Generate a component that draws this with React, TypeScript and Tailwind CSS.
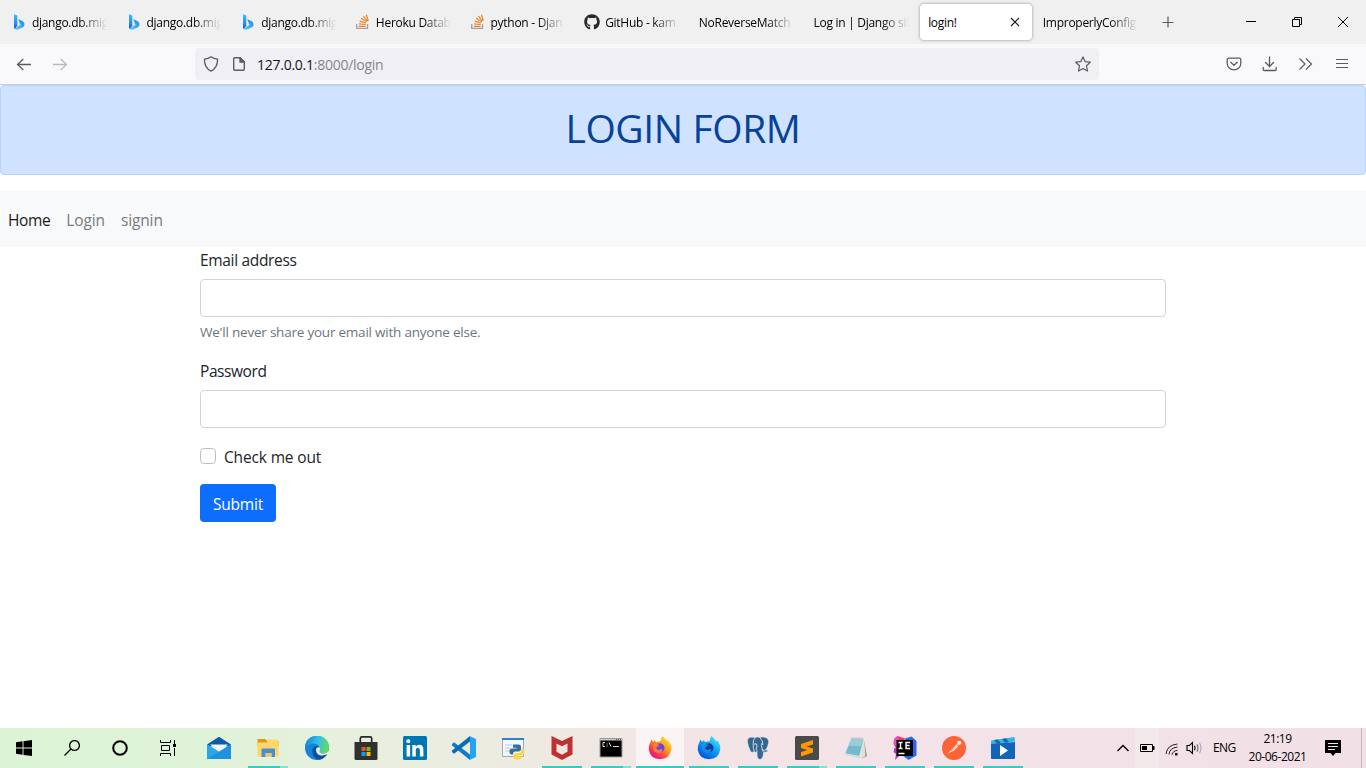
import React from "react";
import { FaGithub } from "react-icons/fa";

function BingIcon() {
  return (
    <svg width="16" height="16" viewBox="0 0 16 16">
      <defs>
        <linearGradient id="bing-a" x1="0" y1="0" x2="0" y2="1">
          <stop offset="0" stopColor="#37bdff" />
          <stop offset="0.6" stopColor="#2b8df0" />
          <stop offset="1" stopColor="#1b48ef" />
        </linearGradient>
        <linearGradient id="bing-b" x1="1" y1="0" x2="0" y2="1">
          <stop offset="0" stopColor="#1b7ff0" />
          <stop offset="1" stopColor="#58d7fb" />
        </linearGradient>
      </defs>
      <path d="M3 .3 6.300 1.600V11.600L4 15Q3 14.600 3 13.400Z" fill="url(#bing-a)" />
      <path d="M7.200 5 11.800 7.200Q13.800 8.600 13.500 11Q13 12.600 11.600 13.400L6.400 15.800Q4.400 16 3.500 14.600L9.600 10.800 8.500 8.900Z" fill="url(#bing-b)" />
    </svg>
  );
}

function StackIcon() {
  return (
    <svg width="16" height="16" viewBox="0 0 16 16" fill="none">
      <path d="M1.700 10v4.300h10.800V10" stroke="#9aa3ae" strokeWidth="1.300" />
      <path d="M3.700 12.300h7M4 9.800l6.700.7M4.700 7.100l6.300 1.900M6.200 4.300l5.400 3.400M8.500 2.200l3.900 5M11.400.7l1.900 6" stroke="#f48024" strokeWidth="1.200" />
    </svg>
  );
}

type Tab = { title: string; icon?: "bing" | "stack" | "github"; active?: boolean };

const tabs: Tab[] = [
  { title: "django.db.mig", icon: "bing" },
  { title: "django.db.mig", icon: "bing" },
  { title: "django.db.mig", icon: "bing" },
  { title: "Heroku Datab", icon: "stack" },
  { title: "python - Djan", icon: "stack" },
  { title: "GitHub - kam", icon: "github" },
  { title: "NoReverseMatch a" },
  { title: "Log in | Django sit" },
  { title: "login!", active: true },
  { title: "ImproperlyConfig" },
];

function BrowserTab({ tab }: { tab: Tab }) {
  return (
    <div className="flex h-11 w-[114.67px] shrink-0 items-center px-px py-1">
      <div
        className={
          tab.active
            ? "flex h-9 w-[112px] items-center rounded-[4px] bg-white pr-[9px] pl-2 shadow-[0_0_3px_rgba(100,100,115,0.75)]"
            : "flex h-9 w-full items-center pr-[9px] pl-2"
        }
      >
        {tab.icon && (
          <span className="mr-[5px] w-4 shrink-0">
            {tab.icon === "bing" && <BingIcon />}
            {tab.icon === "stack" && <StackIcon />}
            {tab.icon === "github" && <FaGithub size={16} color="#24292e" />}
          </span>
        )}
        <span
          className={
            tab.active
              ? "flex-1 pt-0.5 text-[12px] leading-4 tracking-[-0.3px] whitespace-nowrap text-black"
              : "flex-1 overflow-hidden [mask-image:linear-gradient(to_left,transparent,black_28px)] pt-0.5 text-[12px] leading-4 tracking-[-0.28px] whitespace-nowrap text-black"
          }
        >
          {tab.title}
        </span>
        {tab.active && (
          <svg width="16" height="16" viewBox="0 0 16 16" stroke="#15141a" strokeWidth="1.1">
            <path d="M4 4l8 8M12 4l-8 8" />
          </svg>
        )}
      </div>
    </div>
  );
}

function TabStrip() {
  return (
    <div className="flex h-11 bg-[#f0f0f0] pl-[1.9px]">
      {tabs.map((t, i) => (
        <BrowserTab key={i} tab={t} />
      ))}
      <div className="flex flex-1 items-center">
        <svg className="ml-[12px]" width="16" height="16" viewBox="0 0 16 16" stroke="#5b5b66" strokeWidth="1.2">
          <path d="M8 2.500v11M2.500 8.500h11" />
        </svg>
      </div>
      <div className="flex w-[138px]">
        <div className="flex w-[46px] items-center justify-center">
          <svg width="12" height="12" viewBox="0 0 12 12" shapeRendering="crispEdges">
            <path d="M1 5h10v1H1z" fill="#000" />
          </svg>
        </div>
        <div className="flex w-[46px] items-center justify-center">
          <svg width="12" height="12" viewBox="0 0 12 12" fill="none" stroke="#000">
            <path d="M1.500 3.500h7v7h-7zM3.500 3.500v-2h7v7h-2" />
          </svg>
        </div>
        <div className="flex w-[46px] items-center justify-center">
          <svg width="12" height="12" viewBox="0 0 12 12" stroke="#000" strokeWidth="1">
            <path d="M1 1l10 10M11 1L1 11" />
          </svg>
        </div>
      </div>
    </div>
  );
}

function Toolbar() {
  return (
    <div className="flex h-10 items-center bg-[#f9f9fb] text-[#5b5b66]">
      <svg className="ml-4" width="16" height="16" viewBox="0 0 16 16" fill="none" stroke="currentColor" strokeWidth="1.3">
        <path d="M15 8.500H1.500M7.300 3L1.500 8.500 7.300 14" />
      </svg>
      <svg className="ml-5 text-[#b9b9be]" width="16" height="16" viewBox="0 0 16 16" fill="none" stroke="currentColor" strokeWidth="1.3">
        <path d="M1 8.500h13.500M8.700 3l5.800 5.500L8.700 14" />
      </svg>
      <div className="ml-[127px] flex h-8 w-[904px] items-center rounded-[4px] bg-[#f0eff4] pl-2">
        <svg width="16" height="16" viewBox="0 0 16 16" fill="none" stroke="currentColor" strokeWidth="1.3" strokeLinejoin="round">
          <path d="M8 .8C6.400 2 3.700 2.900 1.500 3.100 1.300 7.500 2.800 12.600 8 15.200 13.200 12.600 14.700 7.500 14.500 3.100 12.300 2.900 9.600 2 8 .8Z" />
        </svg>
        <svg className="ml-3" width="16" height="16" viewBox="0 0 16 16" fill="none" stroke="currentColor" strokeWidth="1.4" strokeLinejoin="round">
          <path d="M9 1.700H3.700a1 1 0 0 0-1 1V13.300a1 1 0 0 0 1 1h8.600a1 1 0 0 0 1-1V6Z" />
          <path d="M9 1.700V6h4.300Z" fill="currentColor" />
        </svg>
        <span className="ml-[10px] flex-1 pt-px text-[14px] leading-5 tracking-[-0.26px] text-[#85858c]">
          <span className="text-[#15141a]">127.0.0.1</span>:8000/login
        </span>
        <svg className="mr-2" width="16" height="16" viewBox="0 0 16 16" fill="none" stroke="currentColor" strokeWidth="1.2" strokeLinejoin="round">
          <path d="M8 .9l2.100 4.700 5.200.6-3.800 3.500 1 5.300L8 12.400 3.500 15l1-5.300L.7 6.200l5.200-.6Z" />
        </svg>
      </div>
      <svg className="ml-[127px]" width="16" height="16" viewBox="0 0 16 16" fill="none" stroke="currentColor" strokeWidth="1.3" strokeLinecap="round" strokeLinejoin="round">
        <path d="M2.800 2.200h10.400a1.600 1.600 0 0 1 1.600 1.600V7.500a6.800 6.300 0 0 1-13.600 0V3.800a1.600 1.600 0 0 1 1.600-1.600Z" />
        <path d="M4.700 6.300L8 9.300l3.300-3" />
      </svg>
      <svg className="ml-5" width="16" height="16" viewBox="0 0 16 16" fill="none" stroke="currentColor" strokeWidth="1.300" strokeLinecap="round" strokeLinejoin="round">
        <path d="M7.500 .8v9.500M3.500 6.500l4 4 4-4M1.200 11.500v1.800a1.200 1.200 0 0 0 1.200 1.200h10.600a1.200 1.200 0 0 0 1.200-1.200v-1.800" />
      </svg>
      <svg className="ml-5" width="16" height="16" viewBox="0 0 16 16" fill="none" stroke="currentColor" strokeWidth="1.200">
        <path d="M1.500 2.500L7 8 1.500 13.500M8 2.500L13.500 8 8 13.500" />
      </svg>
      <svg className="ml-5" width="16" height="16" viewBox="0 0 16 16" fill="none" stroke="currentColor" strokeWidth="1.200">
        <path d="M2 3.500h12M2 7.500h12M2 11.500h12" />
      </svg>
    </div>
  );
}

function LoginPage() {
  return (
    <main className="flex-1 bg-white text-[#212529]">
      <div className="mb-4 h-[90px] rounded-[4px] border border-[#b6d4fe] bg-[#cfe2ff] pt-4 text-center text-[#084298]">
        <h1 className="text-[39px] leading-[52px] tracking-[-0.4px]">LOGIN FORM</h1>
      </div>
      <nav className="flex h-14 items-center gap-4 bg-[#f8f9fa] px-2 pt-[3px] text-[15.5px] tracking-[-0.12px] text-[#7a7b7c]">
        <a className="tracking-[-0.4px] text-[#191919]">Home</a>
        <a>Login</a>
        <a>signin</a>
      </nav>
      <form className="mx-[200px] text-[15.5px] leading-6">
        <label className="mb-2 block h-6 pt-px tracking-[-0.33px]">Email address</label>
        <input type="email" className="block h-[38px] w-full rounded-[4px] border border-[#ced4da] px-3" />
        <p className="mt-1 mb-4 h-[21px] text-[13.5px] leading-[22px] tracking-[-0.22px] text-[#6c757d]">We'll never share your email with anyone else.</p>
        <label className="mb-2 block h-6 pt-px tracking-[-0.42px]">Password</label>
        <input type="password" className="block h-[38px] w-full rounded-[4px] border border-[#ced4da] px-3" />
        <div className="mt-4 mb-4 flex h-6">
          <input type="checkbox" className="mt-1 size-4 appearance-none rounded-[4px] border border-[#bfbfbf] bg-white" />
          <label className="ml-2 pt-px tracking-[-0.15px]">Check me out</label>
        </div>
        <button type="button" className="h-[38px] w-[76px] rounded-[4px] bg-[#0d6efd] pt-px text-[15.5px] tracking-[-0.2px] text-white">
          Submit
        </button>
      </form>
    </main>
  );
}

function MailIcon() {
  return (
    <svg width="24" height="24" viewBox="0 0 24 24">
      <path d="M0 8.500l12 7 12-7V23H0Z" fill="#28a8ea" />
      <path d="M0 23L24 8.500V23Z" fill="#1585d8" opacity=".6" />
      <path d="M0 8.500L12 .8l12 7.700-3 1.800H3Z" fill="#0a5ba8" />
      <path d="M3 8.500h18L12 15.500Z" fill="#f3f5f8" />
    </svg>
  );
}

function ExplorerIcon() {
  return (
    <svg width="24" height="24" viewBox="0 0 24 24">
      <path d="M1.500 3h8l1.500 2h11.500v5h-21Z" fill="#d99c16" />
      <path d="M11 3.500h11V8H11Z" fill="#ffd869" />
      <path d="M1.500 6.500h9l1.500-1h10.500V20.500h-21Z" fill="#ffd668" />
      <path d="M5.500 13.500Q5.500 12.500 6.500 12.500h11.500Q19 12.500 19 13.500V21h-3.500v-4h-6V21h-4Z" fill="#468fd4" />
      <path d="M9.500 17h6v3.500h-6Z" fill="#e9c568" />
    </svg>
  );
}

function EdgeIcon() {
  return (
    <svg width="24" height="24" viewBox="0 0 24 24">
      <defs>
        <linearGradient id="edge-top" x1="0" y1=".4" x2="1" y2=".6">
          <stop offset="0" stopColor="#1687d9" />
          <stop offset=".5" stopColor="#32bfe6" />
          <stop offset="1" stopColor="#67dd55" />
        </linearGradient>
      </defs>
      <circle cx="12" cy="12" r="12" fill="#1684d6" />
      <path d="M0 11.500A12 12 0 0 1 24 11.500Q24 17 18.500 17.500 13 17.500 14 14.800 16 12 13 9 7 5 0 11.500Z" fill="url(#edge-top)" />
      <path d="M7.300 14C8.500 9.500 13 8.800 14.500 12.200 11.500 14 13.500 17 17 17.500Q20 18 22.500 16.500 20.500 22 14.500 23.800 7 23 7.300 14Z" fill="#0d4f9b" />
      <path d="M11 14.200Q10.500 11 14.500 11.300 16 12.500 14.700 14.300 13.500 17.500 18.500 17.500 21.500 17.200 24 14.800V17.500Q19 20 15.500 19.500 11.500 18.500 11 14.200Z" fill="#e6efdd" />
    </svg>
  );
}

function StoreIcon() {
  return (
    <svg width="24" height="24" viewBox="0 0 24 24">
      <path d="M6.300 8V2.500a1.700 1.700 0 0 1 1.700-1.600h8A1.700 1.700 0 0 1 17.700 2.500V8" fill="none" stroke="#292929" strokeWidth="1.700" />
      <path d="M.5 6h23v16.500a1.500 1.500 0 0 1-1.500 1.500H2a1.500 1.500 0 0 1-1.500-1.500Z" fill="#303030" />
      <path d="M7.500 11h4v4h-4Z" fill="#f25022" />
      <path d="M12.500 11h4v4h-4Z" fill="#7fba00" />
      <path d="M7.500 16h4v4h-4Z" fill="#00a4ef" />
      <path d="M12.500 16h4v4h-4Z" fill="#ffb900" />
    </svg>
  );
}

function LinkedInIcon() {
  return (
    <svg width="24" height="24" viewBox="0 0 24 24">
      <rect width="24" height="24" rx="1.500" fill="#0077b5" />
      <circle cx="5.300" cy="5.300" r="2" fill="#fff" />
      <path d="M3.600 9h3.500v11.400H3.600ZM9.300 9h3.400v1.600Q13.800 8.700 16.200 8.700 20.400 8.700 20.400 13.700V20.400h-3.500v-6Q16.900 11.800 15 11.800 12.800 11.800 12.800 14.600V20.400H9.300Z" fill="#fff" />
    </svg>
  );
}

function CodeIcon() {
  return (
    <svg width="24" height="24" viewBox="0 0 24 24">
      <path d="M0 8L2 6.200 18 18.500V24L0 9.500Z" fill="#0f7cc5" />
      <path d="M0 16l2 1.800L18 5.500V0L0 14.500Z" fill="#0b6cb5" />
      <path d="M17.500 0L24 3v18l-6.500 3Q18 23.500 18 22.500V1.500Z" fill="#25a4f3" />
    </svg>
  );
}

function PythonFileIcon() {
  return (
    <svg width="24" height="24" viewBox="0 0 24 24">
      <path d="M1.500 2.500h21v18h-21Z" fill="#f5f8fa" stroke="#9eaab3" />
      <path d="M1 2h22v2H1Z" fill="#2a82c9" />
      <path d="M4 9h7M4 12h6M4 15h5" stroke="#c0c9cf" />
      <path d="M12 8.500h5.500Q20 8.500 20 11v2.500q0 2-2.500 2h-3q-2.500 0-2.500 3H10q-2-1-1.500-4 .5-2 2.500-2h4.500v-.8H12V10Z" fill="#336f9f" />
      <path d="M20.500 12.500H22q2 1 1.500 4-.4 2.500-2.500 2.500h-4v.8h3.500v2q-.3 1.700-3.500 1.700-4.500.2-4.500-2v-2.500q0-2 2.500-2h3q2.500-.3 2.500-2.500Z" fill="#ffd545" />
    </svg>
  );
}

function McAfeeIcon() {
  return (
    <svg width="24" height="24" viewBox="0 0 24 24">
      <path d="M1.500 0L12 5 22.500 0v18.500L12 24 1.500 18.500Z" fill="#c02f31" />
      <path d="M6.500 7.500L12 10.300l5.500-2.800V15.800L12 18.800 6.500 15.800Z" fill="#efe6e1" />
    </svg>
  );
}

function TerminalIcon() {
  return (
    <svg width="24" height="24" viewBox="0 0 24 24">
      <path d="M1 2.500h22v18.500H1Z" fill="#000" stroke="#9b9b9b" />
      <path d="M1 3h22v1.500H1Z" fill="#c9c9c9" />
      <path d="M17 3h1v1h-1ZM19 3h1v1h-1ZM21 3h1v1h-1Z" fill="#555" />
      <path d="M6 6.500H4v4h2M8 7.500v1M8 9.500v1M10 6.500l2 4M14 10.500h6" stroke="#ddd" fill="none" />
    </svg>
  );
}

function FirefoxIcon({ dev = false }: { dev?: boolean }) {
  return (
    <svg width="24" height="24" viewBox="0 0 24 24">
      <defs>
        <linearGradient id="ff-body" x1=".85" y1=".1" x2=".2" y2=".9">
          <stop offset="0" stopColor="#ffe226" />
          <stop offset=".4" stopColor="#ff9a1f" />
          <stop offset=".75" stopColor="#ff3c48" />
          <stop offset="1" stopColor="#e31587" />
        </linearGradient>
        <linearGradient id="ffd-body" x1=".8" y1=".1" x2=".2" y2=".9">
          <stop offset="0" stopColor="#3fe1f5" />
          <stop offset=".45" stopColor="#0a9df5" />
          <stop offset="1" stopColor="#0358dc" />
        </linearGradient>
      </defs>
      <path
        d="M14.500 0Q17 2.200 19.500 5.500L20.300 4.200Q24 8.500 23.200 14 21.500 23 12 23.300 2.500 23 .8 14 .4 9.500 2.200 7L3.200 3.600 5.200 6 6.300 4.200 8.200 6 10.500 5.500Q12 5.200 12.800 5 12.500 1.800 14.500 0Z"
        fill={dev ? "url(#ffd-body)" : "url(#ff-body)"}
      />
      <path d="M7 9.300Q9.500 7 12.500 7.300 16.800 8.500 16.500 12.500 15.500 16.500 11.500 16.500 7 16 6.300 12.500Z" fill={dev ? "#1a3c9a" : "#7542d5"} />
      <path d="M4.500 8.500Q8 6.800 11.500 9.300L9.500 10.800Q7.800 11.300 8.500 13 11 14.800 14.200 12.800 14.500 17 10.500 17 6 16.800 5 12.500Z" fill={dev ? "#1296ea" : "#ff8a2a"} opacity=".85" />
    </svg>
  );
}

function PostgresIcon() {
  return (
    <svg width="24" height="24" viewBox="0 0 24 24">
      <path
        d="M1.500 6Q1 1.500 5.500 1.200 7.500 1 9 1.800 11 .6 13.500 1.500 16 .7 18.500 1.200 23 2.200 22.600 6.500 22 10.500 19.800 14 21.500 14.300 22.300 14.400 20.500 16.500 17.500 16.200 17.300 22.500 14.500 23.200 11.500 24 11.200 19.500L11 15.500Q9.500 17 8 15.300 5.500 18 4 14 2.200 10.500 1.500 6Z"
        fill="#336791"
        stroke="#e9e5ea"
        strokeWidth=".5"
      />
      <path d="M8.800 2.200Q6.800 4 7.200 8.500 7 13 8.300 15M8 8.300Q10 7 10.800 8.600 11.400 11 10 13.200 11.200 14 11 15.500M14 1.700Q16.800 4.500 17 8.500 15.300 7.900 15.200 9.700 16.500 11.800 16.200 13.500 17.400 16.200 17.500 16.200M16.400 13.800Q18.500 14.900 19.800 14" fill="none" stroke="#e9edf2" strokeWidth=".85" />
      <circle cx="10" cy="8" r=".5" fill="#fff" />
      <circle cx="15.500" cy="7.700" r=".5" fill="#fff" />
    </svg>
  );
}

function SublimeIcon() {
  return (
    <svg width="24" height="24" viewBox="0 0 24 24">
      <rect width="24" height="24" rx="1.500" fill="#4a4a4a" />
      <path d="M6 8L18 4v4.500l-6.500 2L18 12.500v4L6 20.500V16l6.500-2L6 12Z" fill="#ff9800" />
    </svg>
  );
}

function NotepadIcon() {
  return (
    <svg width="24" height="24" viewBox="0 0 24 24">
      <path d="M19.500 2L23 20l-5 2.500Z" fill="#a18b63" />
      <path d="M17 3.500l3-1.500 1.500 18-4 2.500Z" fill="#dfe0d9" />
      <path d="M7 2.500L20 3 15.500 20.500.8 17.500Z" fill="#76b9ca" stroke="#e7f0f1" strokeWidth=".7" />
      <path d="M7.300 3.200L19.300 3.500 17 10.500 4 9.500Z" fill="#a5d6df" opacity=".7" />
      <path d="M.8 17.500L15.500 20.500 18.500 22.500 15 22 1 19Z" fill="#d4dada" />
      <path d="M8 1.500v1.500M10 1.500v1.500M12 1.500v1.500M14 1.500v1.500M16 1.500v1.500M18 1.500v1.500" stroke="#9b9e9d" strokeWidth=".8" />
    </svg>
  );
}

function IdeaIcon() {
  return (
    <svg width="24" height="24" viewBox="0 0 24 24">
      <path d="M12 2.500L18.500.5 23.500 5V19.500L15.500 24 9 19Z" fill="#2867e8" />
      <path d="M1 3L4.500 0 12 2.500 8 12H3L.5 8Z" fill="#f7315d" />
      <path d="M1.500 12L8 10V18L2 24 3 18 .5 16Z" fill="#ae3bc7" />
      <path d="M1 3L4.500 0 7 5 5 10 1 9Z" fill="#e451ba" />
      <rect x="3.500" y="4" width="16.500" height="16" fill="#000" />
      <path d="M5.500 6.500h4M5.500 12.500h4M7.500 6.500v6M17 6.500h-4v6h4M13 9.500h3.500M5.500 17.500h6" stroke="#fff" strokeWidth="1.400" fill="none" />
    </svg>
  );
}

function PostmanIcon() {
  return (
    <svg width="24" height="24" viewBox="0 0 24 24">
      <circle cx="12" cy="12" r="12" fill="#ff6235" />
      <path d="M5.500 17.500L9 14.200 15 8l1.500 2-5 5Z" fill="#fff3ed" />
      <circle cx="17.200" cy="6.800" r="2.100" fill="#fff3ed" />
      <path d="M9 15l7-6M8.500 14l2.200 2" stroke="#ff6c37" strokeWidth=".6" />
    </svg>
  );
}

function VideoIcon() {
  return (
    <svg width="24" height="24" viewBox="0 0 24 24">
      <path d="M0 4.500L23.500 1l.5 4.500-24 3Z" fill="#31b5ea" />
      <path d="M3 4l4-.6 3 4-4 .5ZM11 3l4-.7 3 4-4 .5Z" fill="#1768b3" />
      <path d="M0 8l24-2v16a1 1 0 0 1-1 1h-22A1 1 0 0 1 0 22Z" fill="#1164b8" />
      <path d="M9 9l8 5.500L9 20Z" fill="#fff" />
    </svg>
  );
}

const apps: { icon: React.ReactNode; state: "none" | "open" | "multi" | "focus" }[] = [
  { icon: <MailIcon />, state: "none" },
  { icon: <ExplorerIcon />, state: "multi" },
  { icon: <EdgeIcon />, state: "none" },
  { icon: <StoreIcon />, state: "none" },
  { icon: <LinkedInIcon />, state: "none" },
  { icon: <CodeIcon />, state: "none" },
  { icon: <PythonFileIcon />, state: "none" },
  { icon: <McAfeeIcon />, state: "open" },
  { icon: <TerminalIcon />, state: "multi" },
  { icon: <FirefoxIcon />, state: "focus" },
  { icon: <FirefoxIcon dev />, state: "open" },
  { icon: <PostgresIcon />, state: "open" },
  { icon: <SublimeIcon />, state: "multi" },
  { icon: <NotepadIcon />, state: "open" },
  { icon: <IdeaIcon />, state: "open" },
  { icon: <PostmanIcon />, state: "open" },
  { icon: <VideoIcon />, state: "open" },
];

function Taskbar() {
  return (
    <footer className="flex h-10 bg-[linear-gradient(90deg,#ddf3d6_0%,#def3d7_14%,#e8efdf_27%,#efe9e2_42%,#f3e4e6_52%,#f4e2e9_75%,#f2e0e7_100%)] text-black">
      <div className="mr-[3px] flex w-48">
        <div className="flex w-12 items-center justify-center">
          <svg width="16" height="16" viewBox="0 0 16 16">
            <path d="M0 2.300L6.600 1.300V7.500H0ZM7.500 1.200L16 0v7.500H7.500ZM0 8.500h6.600v6.300L0 13.800ZM7.500 8.500H16V16L7.500 14.900Z" />
          </svg>
        </div>
        <div className="flex w-12 items-center justify-center">
          <svg width="16" height="16" viewBox="0 0 16 16" fill="none" stroke="#000" strokeWidth="1.300">
            <circle cx="10.500" cy="5.500" r="4.900" />
            <path d="M7 9L.5 15.500" />
          </svg>
        </div>
        <div className="flex w-12 items-center justify-center">
          <svg width="16" height="16" viewBox="0 0 16 16" fill="none" stroke="#000" strokeWidth="2">
            <circle cx="8" cy="8" r="6.800" />
          </svg>
        </div>
        <div className="flex w-12 items-center justify-center">
          <svg width="16" height="16" viewBox="0 0 16 16" fill="none" stroke="#000">
            <path d="M.5 0v2.500h10V0M.5 16v-2.500h10V16M1.500 5.500h8v5h-8ZM14.500 0v4M14.500 8v8" />
            <path d="M13 4h3v3h-3Z" fill="#000" stroke="none" />
          </svg>
        </div>
      </div>
      <div className="flex flex-1 gap-px">
        {apps.map((a, i) => (
          <div key={i} className={a.state === "focus" ? "flex w-12 flex-col items-center bg-[#faf4f4]" : "flex w-12 flex-col items-center"}>
            <div className="flex h-[38px] items-center pt-0.5">{a.icon}</div>
            {a.state === "focus" && <div className="h-0.5 w-12 bg-[#2bd2c2]" />}
            {a.state === "open" && <div className="h-0.5 w-10 bg-[#2bd2c2]" />}
            {a.state === "multi" && (
              <div className="flex h-0.5 w-10">
                <div className="w-8 bg-[#2bd2c2]" />
                <div className="w-2 bg-[#7be3d9]" />
              </div>
            )}
          </div>
        ))}
      </div>
      <div className="flex w-[251px] items-center">
        <svg width="16" height="16" viewBox="0 0 16 16" fill="none" stroke="#000" strokeWidth="1.300">
          <path d="M2.500 11L8 5.500l5.500 5.500" />
        </svg>
        <div className="ml-1 flex h-10 w-6 items-center justify-center bg-[#f3e8ea]">
          <svg width="16" height="10" viewBox="0 0 16 10">
            <path d="M1.500 1.500h12v7h-12Z" fill="none" stroke="#000" />
            <path d="M3 3h5v4H3Z" />
            <path d="M14 3h1.500v4H14Z" />
          </svg>
        </div>
        <svg className="mt-0.5 ml-1.5" width="14" height="14" viewBox="0 0 14 14" fill="none" stroke="#222" strokeWidth="1">
          <path d="M1 12Q2 3 12.500 2M4 12.500Q4.500 6 12.500 5M7 12.800Q7.500 9 12.500 8.300" />
          <path d="M10 11h2.500v2.500H10Z" fill="#000" stroke="none" />
        </svg>
        <svg className="ml-[7px]" width="18" height="14" viewBox="0 0 18 14" fill="none" stroke="#000" strokeWidth="1.100">
          <path d="M1 4.500h2.500L6.500 1.500v11L3.500 9.500H1Z" />
          <path d="M8.500 4.800Q9.700 7 8.500 9.200" />
          <path d="M11 3.200Q13 7 11 10.800" stroke="#777" />
          <path d="M13.500 1.800Q16.500 7 13.500 12.200" stroke="#aaa" />
        </svg>
        <span className="ml-[9px] w-[24px] text-[12px] leading-4 tracking-[-0.6px]">ENG</span>
        <div className="ml-[8px] w-[65px] text-center text-[12px] leading-[18px] tracking-[-0.47px] whitespace-nowrap">
          <div>21:19</div>
          <div>20-06-2021</div>
        </div>
        <svg className="ml-[15px]" width="16" height="16" viewBox="0 0 16 16">
          <path d="M0 0h16v13h-5.500L8 16 5.500 13H0Z" />
          <path d="M3 3.500h10M3 6.500h10M3 9.500h7" stroke="#f3e2e8" />
        </svg>
        <div className="ml-5 h-10 w-px bg-[#c6b9be]" />
      </div>
    </footer>
  );
}

export default function App() {
  return (
    <div className="flex h-[768px] w-[1366px] flex-col overflow-hidden bg-white font-['Open_Sans','Noto_Sans',sans-serif]">
      <TabStrip />
      <Toolbar />
      <div className="h-px bg-[#ccccce]" />
      <LoginPage />
      <Taskbar />
    </div>
  );
}
